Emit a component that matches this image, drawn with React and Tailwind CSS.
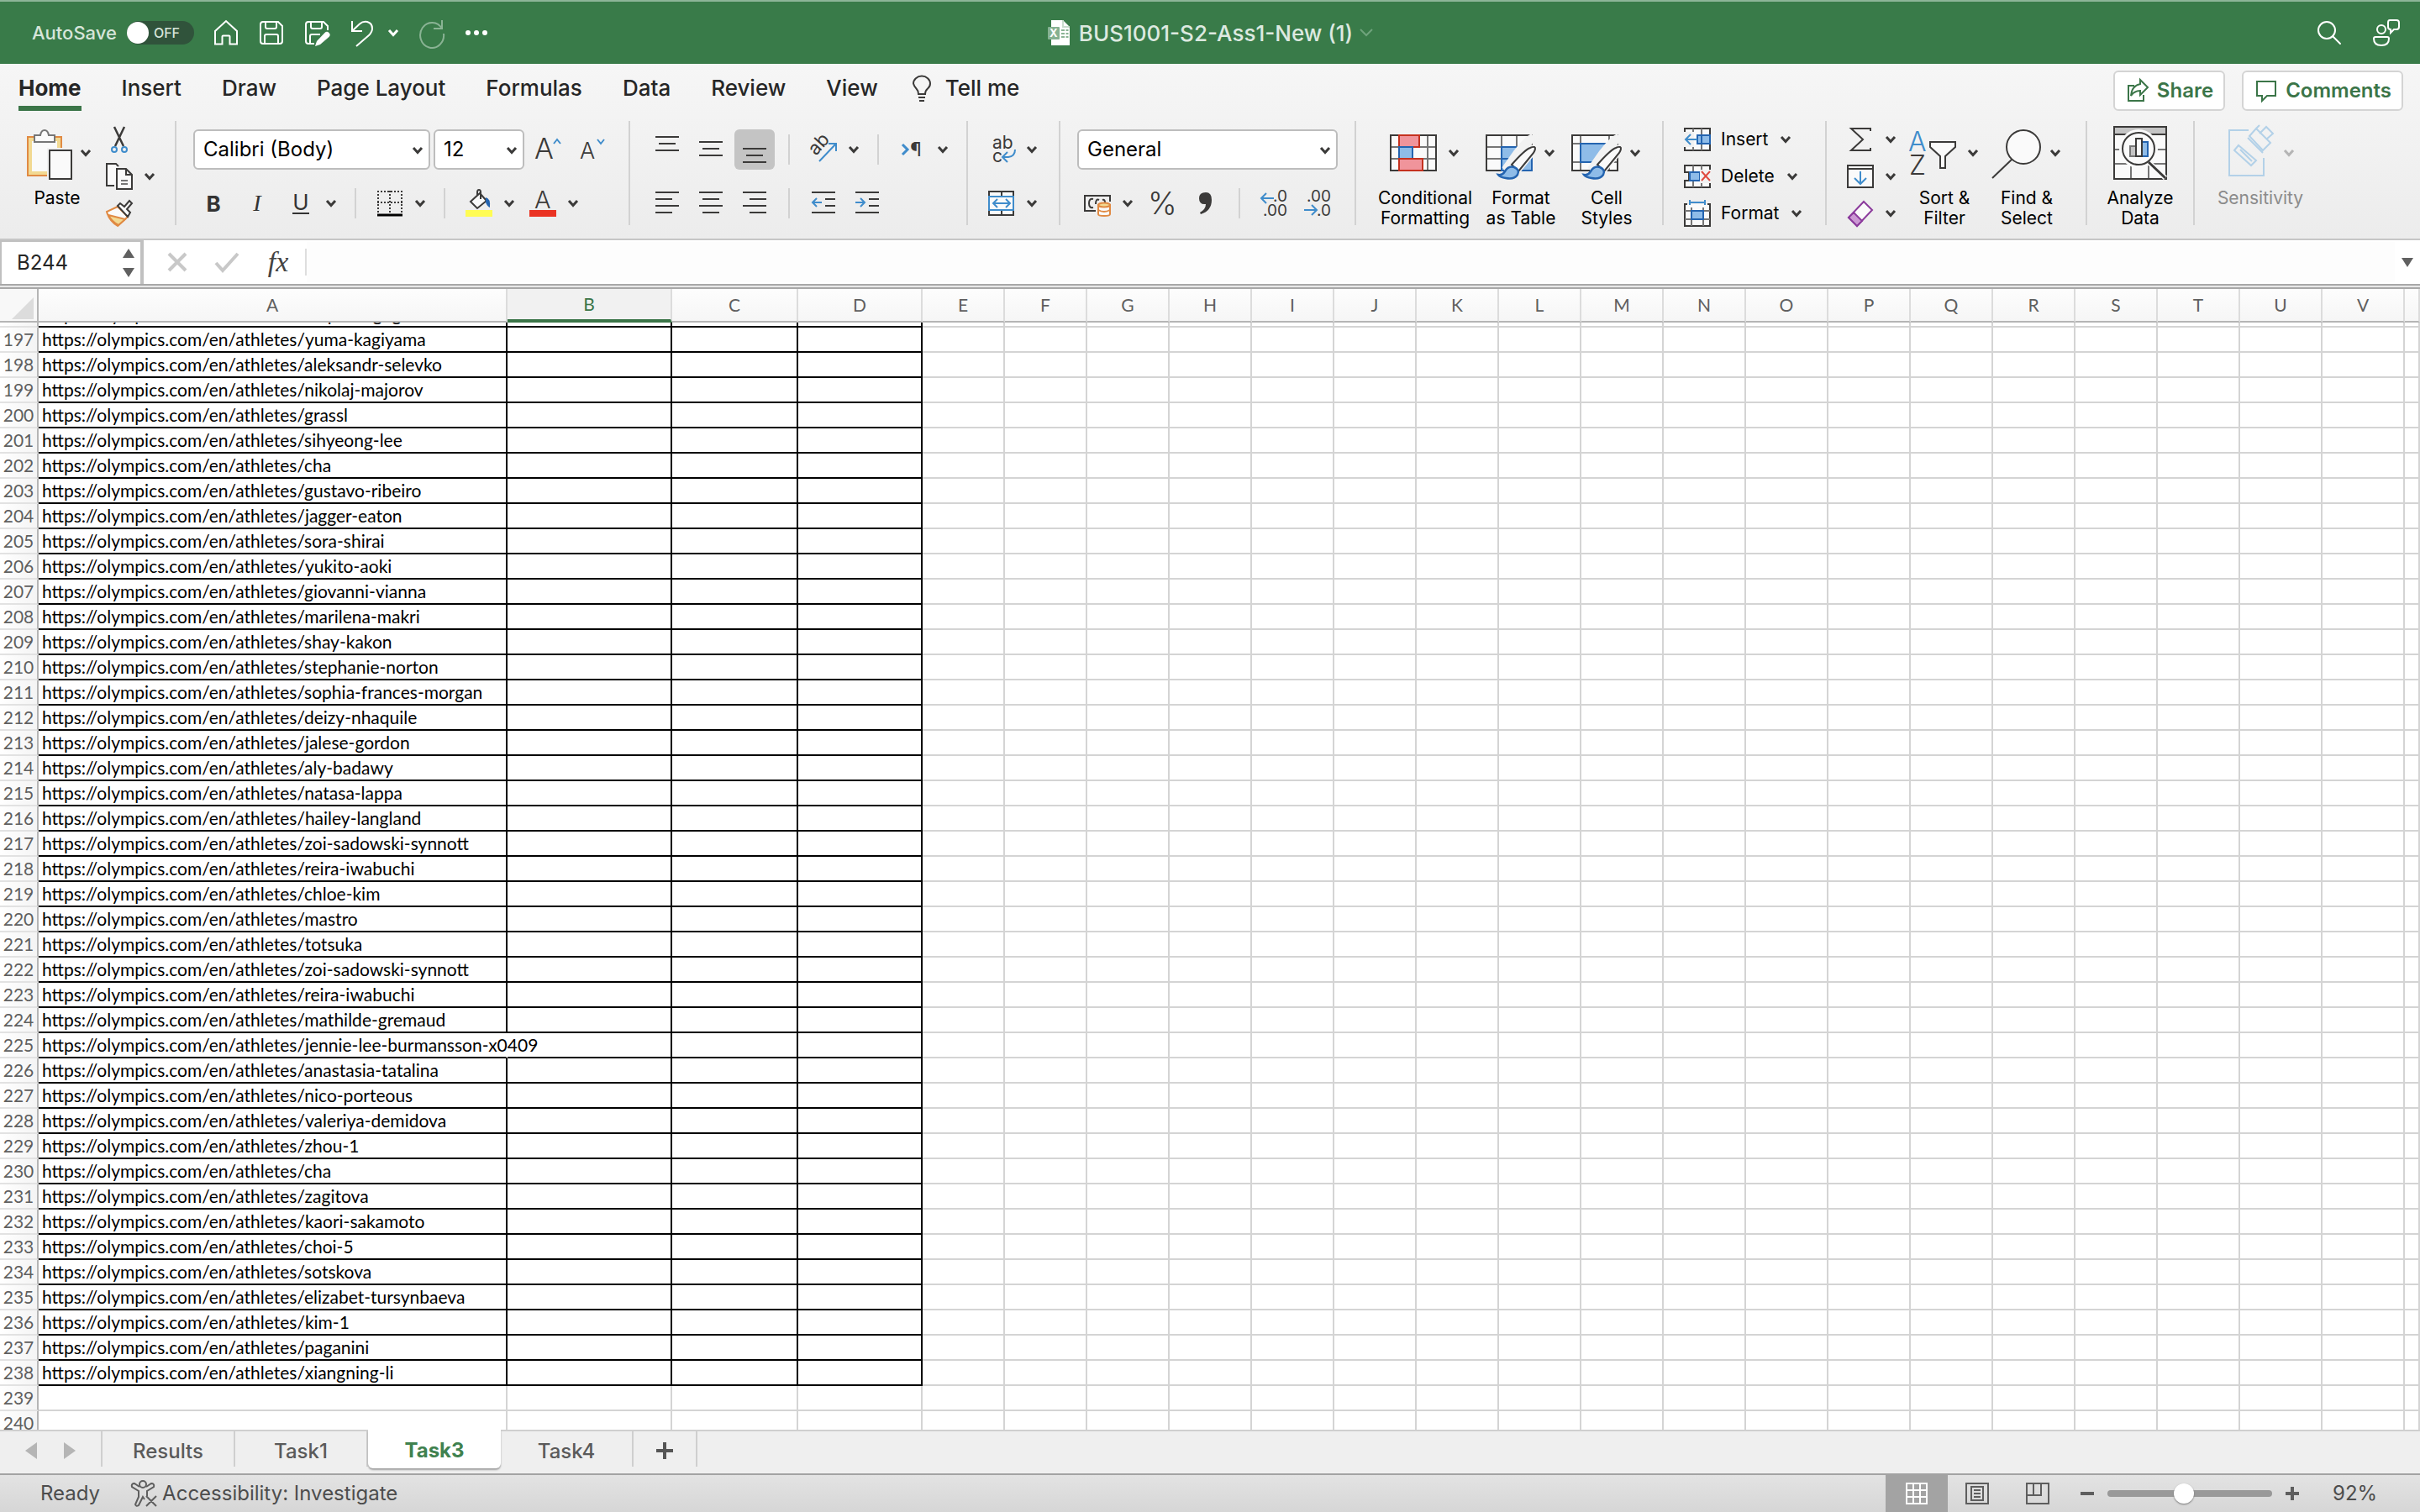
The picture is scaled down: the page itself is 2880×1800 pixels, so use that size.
import React, { useState } from "react";

const athletes = [
	"stephen-gogolev",
	"yuma-kagiyama",
	"aleksandr-selevko",
	"nikolaj-majorov",
	"grassl",
	"sihyeong-lee",
	"cha",
	"gustavo-ribeiro",
	"jagger-eaton",
	"sora-shirai",
	"yukito-aoki",
	"giovanni-vianna",
	"marilena-makri",
	"shay-kakon",
	"stephanie-norton",
	"sophia-frances-morgan",
	"deizy-nhaquile",
	"jalese-gordon",
	"aly-badawy",
	"natasa-lappa",
	"hailey-langland",
	"zoi-sadowski-synnott",
	"reira-iwabuchi",
	"chloe-kim",
	"mastro",
	"totsuka",
	"zoi-sadowski-synnott",
	"reira-iwabuchi",
	"mathilde-gremaud",
	"jennie-lee-burmansson-x0409",
	"anastasia-tatalina",
	"nico-porteous",
	"valeriya-demidova",
	"zhou-1",
	"cha",
	"zagitova",
	"kaori-sakamoto",
	"choi-5",
	"sotskova",
	"elizabet-tursynbaeva",
	"kim-1",
	"paganini",
	"xiangning-li",
];

const FIRST_ROW = 196;
const LAST_ROW = 240;
const plainCols = "EFGHIJKLMNOPQRSTUV".split("");
const rows = [];
for (let n = FIRST_ROW; n <= LAST_ROW; n++) {
	rows.push({ n, slug: athletes[n - FIRST_ROW] });
}

const dark = "#3b3a39";
const blue = "#3f8ccb";
const deep = "#2464b0";
const light = "#8fbce8";

/* ---------- small building blocks ---------- */

function Svg({ w = 32, h = 32, children }) {
	return (
		<svg
			width={w}
			height={h}
			viewBox={`0 0 ${w} ${h}`}
			fill="none"
			stroke={dark}
			strokeWidth="2"
			className="shrink-0 overflow-visible"
			aria-hidden="true"
		>
			{children}
		</svg>
	);
}

function Letter({ x, y, size, color = dark, weight = 300, children }) {
	return (
		<text x={x} y={y} fontSize={size} fontWeight={weight} fill={color} stroke="none">
			{children}
		</text>
	);
}

function Chevron({ color = dark }) {
	return (
		<svg width="14" height="10" viewBox="0 0 14 10" fill="none" aria-hidden="true">
			<path d="M2 2l5 5.5L12 2" stroke={color} strokeWidth="3" />
		</svg>
	);
}

function Tool({ label, active, children }) {
	return (
		<button
			aria-label={label}
			className={
				active
					? "flex h-12 w-12 shrink-0 items-center justify-center rounded-md bg-[#c4c4c4]"
					: "flex h-12 w-12 shrink-0 items-center justify-center"
			}
		>
			{children}
		</button>
	);
}

function More({ label, color }) {
	return (
		<button
			aria-label={label + " options"}
			className="flex h-12 w-6 shrink-0 items-center justify-center"
		>
			<Chevron color={color} />
		</button>
	);
}

function Split({ label, children }) {
	return (
		<div className="flex items-center">
			<Tool label={label}>{children}</Tool>
			<More label={label} />
		</div>
	);
}

function Rule() {
	return <div className="mx-4 h-9 w-0.5 shrink-0 bg-[#d2d2d2]" />;
}

function Group({ className, children }) {
	return (
		<div className={"h-[124px] shrink-0 border-r-2 border-[#d2d2d2] " + className}>
			{children}
		</div>
	);
}

function Big({ lines, width, muted, noMenu, children }) {
	return (
		<button className={"flex shrink-0 flex-col items-center pt-1.5 " + width}>
			<span className="flex h-16 items-center gap-1">
				{children}
				{!noMenu && (
					<span className="flex w-6 justify-center">
						<Chevron color={muted ? "#b5b5b5" : dark} />
					</span>
				)}
			</span>
			<span
				className={
					muted
						? "mt-2.5 text-[21px] leading-6 text-[#8b8b8b]"
						: "mt-2.5 text-[21px] leading-6 text-black"
				}
			>
				{lines.map((line) => (
					<span key={line} className="block whitespace-nowrap">
						{line}
					</span>
				))}
			</span>
		</button>
	);
}

function RibbonSelect({ label, value, width }) {
	return (
		<label className={"relative block shrink-0 " + width}>
			<select
				aria-label={label}
				defaultValue={value}
				className="h-12 w-full appearance-none rounded-md border-2 border-[#bdbdbd] bg-white pl-2.5 text-[24px] text-black"
			>
				<option>{value}</option>
			</select>
			<span className="pointer-events-none absolute top-5 right-2">
				<Chevron />
			</span>
		</label>
	);
}

function Lines({ rows }) {
	return (
		<Svg>
			{rows.map(([x1, x2, y]) => (
				<path key={y} d={`M${x1} ${y}H${x2}`} />
			))}
		</Svg>
	);
}

/* ---------- title bar ---------- */

function TitleBar() {
	const [autoSave, setAutoSave] = useState(false);
	return (
		<header className="grid h-[76px] shrink-0 grid-cols-[1fr_auto_1fr] items-center border-t-2 border-[#8db598] bg-[#397b49] text-white">
			<div className="flex items-center pl-[38px]">
				<span id="autosave" className="text-[22px] font-medium text-[#d6e5da]">
					AutoSave
				</span>
				<button
					role="switch"
					aria-checked={autoSave}
					aria-labelledby="autosave"
					onClick={() => setAutoSave(!autoSave)}
					className="ml-3 flex h-7 w-20 items-center rounded-full bg-[#30533b]"
				>
					<span className="h-[26px] w-[26px] rounded-full bg-white" />
					<span className="ml-1.5 text-[16px] font-medium text-[#d6e5da]">OFF</span>
				</button>
				<div className="ml-[22px] flex items-center gap-[22px]">
					<button aria-label="Home">
						<Svg>
							<path
								stroke="#fff"
								d="M3 14L16 2l13 12v15.500h-8.500V20.500q0-1-1-1h-7q-1 0-1 1v9H3z"
							/>
						</Svg>
					</button>
					<button aria-label="Save">
						<Svg>
							<path
								stroke="#fff"
								d="M3 6q0-3 3-3h18l5 5v18q0 3-3 3H6q-3 0-3-3zM9 3v6q0 2 2 2h9q2 0 2-2V3M8 29V20q0-2 2-2h12q2 0 2 2v9"
							/>
						</Svg>
					</button>
					<button aria-label="Save as">
						<Svg>
							<path
								stroke="#fff"
								d="M13 29H6q-3 0-3-3V6q0-3 3-3h18l5 5v5M9 3v6q0 2 2 2h9q2 0 2-2V3M8 29V20q0-2 2-2h10"
							/>
							<path
								fill="#fff"
								stroke="none"
								d="M25.500 16a3.500 3.500 0 0 1 5 5L20 30l-6 2 2-6z"
							/>
						</Svg>
					</button>
					<div className="flex items-center gap-3.5">
						<button aria-label="Undo">
							<Svg>
								<path
									stroke="#fff"
									d="M4 2v12h12M4 14L13 5.500Q17 2 22 3q6 1.500 6 8 0 4-4 8L9 32"
								/>
							</Svg>
						</button>
						<button aria-label="Undo history">
							<Chevron color="#fff" />
						</button>
					</div>
					<button aria-label="Redo">
						<Svg>
							<g stroke="#8ab394">
								<path d="M29 1v10H19M29 11A14 15 0 1 0 31 17" />
							</g>
						</Svg>
					</button>
					<button aria-label="Customize toolbar">
						<Svg>
							<g fill="#fff" stroke="none">
								<circle cx="6" cy="16" r="3" />
								<circle cx="16" cy="16" r="3" />
								<circle cx="26" cy="16" r="3" />
							</g>
						</Svg>
					</button>
				</div>
			</div>
			<div className="flex items-center">
				<Svg w={28} h={32}>
					<path d="M5 1h14l8 8v22H5z" fill="#fff" stroke="none" />
					<path d="M19 1v8h8" stroke="#c9dccd" />
					<path
						d="M17 13h4M17 17h4M17 21h4M22.500 13h3M22.500 17h3M22.500 21h3"
						stroke="#8ab394"
					/>
					<rect x="1" y="9" width="14" height="15" rx="1" fill="#86b192" stroke="none" />
					<Letter x="3" y="21" size="13" color="#fff" weight="700">
						X
					</Letter>
				</Svg>
				<h1 className="ml-2.5 text-[26px] font-medium whitespace-nowrap text-[#dde9e0]">
					BUS1001-S2-Ass1-New (1)
				</h1>
				<button aria-label="File menu" className="ml-2">
					<Svg w={16} h={12}>
						<path d="M1 2l7 7 7-7" stroke="#6fa37c" />
					</Svg>
				</button>
			</div>
			<div className="flex items-center justify-end gap-9 pr-6">
				<button aria-label="Search">
					<Svg>
						<g stroke="#fff" strokeLinecap="round">
							<circle cx="13" cy="13" r="10" />
							<path d="M20 20l9 9" />
						</g>
					</Svg>
				</button>
				<button aria-label="Contact">
					<Svg>
						<g stroke="#fff">
							<circle cx="10" cy="12" r="5" />
							<path d="M3 21h14q2 0 2 2 0 8-9 8t-9-8q0-2 2-2zM20 1h8q3 0 3 3v5q0 3-3 3h-3l-4 4v-4q-3 0-3-3V4q0-3 2-3z" />
						</g>
					</Svg>
				</button>
			</div>
		</header>
	);
}

/* ---------- ribbon ---------- */

const tabs = ["Insert", "Draw", "Page Layout", "Formulas", "Data", "Review", "View"];

function Tabs() {
	return (
		<nav className="flex h-[68px] items-start pt-2 pr-5 pl-[22px] font-medium text-[#262626]">
			<div className="flex flex-1 items-start gap-12 text-[26px] leading-[42px]">
				<button className="border-b-[6px] border-[#3b7548] font-bold">Home</button>
				{tabs.map((tab) => (
					<button key={tab} className="whitespace-nowrap">
						{tab}
					</button>
				))}
				<button className="-ml-3 flex items-center gap-3 whitespace-nowrap">
					<Svg>
						<path d="M12 23q0-4-2.500-6.500T6 10.500a10 9 0 0 1 20 0q0 3.500-3 6T20 23zM12 27h8M13 31h6" />
					</Svg>
					Tell me
				</button>
			</div>
			<div className="flex gap-5 text-[24px] font-semibold text-[#3b7548]">
				<button className="flex h-12 items-center gap-2 rounded-md border-2 border-[#d4d4d4] bg-white px-3">
					<Svg w={30}>
						<g stroke="#3b7548">
							<path d="M11 10H4v18h18v-7" />
							<path d="M18 3l9 9-9 9v-5q-7 0-11 6 1-12 11-14z" />
						</g>
					</Svg>
					Share
				</button>
				<button className="flex h-12 items-center gap-2 rounded-md border-2 border-[#d4d4d4] bg-white px-3">
					<Svg w={30}>
						<path stroke="#3b7548" d="M4 5h22v17H16l-6 6v-6H4z" />
					</Svg>
					Comments
				</button>
			</div>
		</nav>
	);
}

function Brush() {
	return (
		<>
			<path
				d="M58 13q2 1 0 5L42 43 26 51 40 31Q52 16 58 13z"
				fill="#f2f2f2"
				stroke="#f2f2f2"
				strokeWidth="6"
			/>
			<path d="M62 25q2.500 1-1 7L43 54l-8-8Q51 28 57 26q3-1.500 5-1z" fill="#f2f2f2" stroke="#f2f2f2" strokeWidth="5" />
			<path d="M62 25q2.500 1-1 7L43 54l-8-8Q51 28 57 26q3-1.500 5-1z" fill="#fafafa" />
			<path
				d="M19 58q5 1 8-4 4-7 11-5 7 3 4 9-4 6-14 4-7-1-9-4z"
				fill={light}
				stroke={deep}
				strokeWidth="2.500"
			/>
		</>
	);
}

function Ribbon() {
	return (
		<div className="flex pb-4 text-[#333]">
			<Group className="flex gap-0.5 pr-[18px] pl-5">
				<Big lines={["Paste"]} width="w-24">
					<Svg w={64} h={64}>
						<rect x="11" y="13" width="40" height="46" fill="#f2d992" stroke="#e08a43" />
						<rect x="16" y="18" width="30" height="36" fill="#fafafa" stroke="none" />
						<path d="M19 19v-8h7q1-6 5-6t5 6h7v8z" fill="#fafafa" stroke="#767676" />
						<rect x="34" y="26" width="30" height="38" fill="#f2f2f2" stroke="none" />
						<rect x="37" y="29" width="26" height="34" fill="#fafafa" />
					</Svg>
				</Big>
				<div>
					<div className="flex h-11 items-center">
						<Tool label="Cut">
							<Svg>
								<path d="M10 1l11 23M22 1L11 24" strokeWidth="2.500" />
								<circle cx="10" cy="28" r="3" stroke={blue} />
								<circle cx="22" cy="28" r="3" stroke={blue} />
							</Svg>
						</Tool>
					</div>
					<div className="flex h-11 items-center">
						<Split label="Copy">
							<Svg>
								<path d="M10 27H1V1h11l3 3" fill="#fafafa" />
								<path d="M13 7h11l7 7v17H13zM24 7v7h7" fill="#fafafa" />
								<path d="M18 21h8M18 25h8" stroke="#767676" />
							</Svg>
						</Split>
					</div>
					<div className="flex h-11 items-center">
						<Tool label="Format painter">
							<Svg>
								<path d="M14 8L1 14q3 11 13 17L26 20z" fill="#fafafa" stroke="#e08a43" />
								<path d="M3 18l20 5-8 7Q7 26 3 18z" fill="#f2d992" stroke="#e08a43" />
								<path d="M14 7l3-3 5 4 6-7 3 3-6 7 4 4-3 5z" fill="#fafafa" />
							</Svg>
						</Tool>
					</div>
				</div>
			</Group>

			<Group className="flex flex-col gap-4 px-5 pt-2.5">
				<div className="flex items-center gap-1">
					<RibbonSelect label="Font" value="Calibri (Body)" width="w-[282px]" />
					<RibbonSelect label="Font size" value="12" width="w-[108px]" />
					<Tool label="Increase font size">
						<Svg>
							<Letter x="0" y="27" size="34">
								A
							</Letter>
							<path d="M23 9l4-5 4 5" stroke={blue} />
						</Svg>
					</Tool>
					<Tool label="Decrease font size">
						<Svg>
							<Letter x="2" y="27" size="27">
								A
							</Letter>
							<path d="M23 4l4 5 4-5" stroke={blue} />
						</Svg>
					</Tool>
				</div>
				<div className="flex items-center">
					<div className="flex gap-1 text-[26px]">
						<Tool label="Bold">
							<span className="font-bold">B</span>
						</Tool>
						<Tool label="Italic">
							<span className="font-['Liberation_Serif'] text-[28px] italic">I</span>
						</Tool>
						<Split label="Underline">
							<span className="border-b-2 border-[#333] leading-6">U</span>
						</Split>
					</div>
					<Rule />
					<Split label="Borders">
						<Svg>
							<path
								d="M1 2h30M1 15h30M2 1v27M16 1v27M30 1v27"
								strokeDasharray="2 2"
								fill="none"
							/>
							<path d="M1 30h30" stroke="#000" strokeWidth="3" />
						</Svg>
					</Split>
					<Rule />
					<div className="flex gap-1">
						<Split label="Fill color">
							<Svg>
								<path d="M6 14L17 4l8 9-11 9zM14 6V3q0-3 2-3t2 3v8" fill="#fafafa" />
								<path d="M24 9q6 1 5 12-3-1-5-6z" fill={deep} stroke="none" />
								<path d="M0 28h32" stroke="#fffc54" strokeWidth="8" />
							</Svg>
						</Split>
						<Split label="Font color">
							<Svg>
								<Letter x="6" y="22" size="29">
									A
								</Letter>
								<path d="M0 28h32" stroke="#ea3323" strokeWidth="8" />
							</Svg>
						</Split>
					</div>
				</div>
			</Group>

			<Group className="flex flex-col gap-4 pt-2.5 pr-4 pl-5">
				<div className="flex items-center">
					<div className="flex gap-1">
						<Tool label="Top align">
							<Lines rows={[[2, 30, 1], [6, 26, 9], [2, 30, 17]]} />
						</Tool>
						<Tool label="Middle align">
							<Lines rows={[[2, 30, 7], [6, 26, 15], [2, 30, 23]]} />
						</Tool>
						<Tool label="Bottom align" active>
							<Lines rows={[[2, 30, 15], [6, 26, 23], [2, 30, 31]]} />
						</Tool>
					</div>
					<Rule />
					<Split label="Orientation">
						<Svg>
							<g transform="translate(7 24) rotate(-48)">
								<Letter x="0" y="0" size="22" weight="400">
									ab
								</Letter>
							</g>
							<path d="M11 30L31 9M22 9h9v9" stroke={blue} />
						</Svg>
					</Split>
					<Rule />
					<Split label="Text direction">
						<Svg w={28}>
							<path d="M2 10l6 6-6 6" stroke={blue} strokeWidth="3" />
							<Letter x="11" y="24" size="23" weight="400">
								¶
							</Letter>
						</Svg>
					</Split>
				</div>
				<div className="flex items-center">
					<div className="flex gap-1">
						<Tool label="Align left">
							<Lines rows={[[2, 30, 3], [2, 22, 11], [2, 30, 19], [2, 22, 27]]} />
						</Tool>
						<Tool label="Center">
							<Lines rows={[[2, 30, 3], [6, 26, 11], [2, 30, 19], [6, 26, 27]]} />
						</Tool>
						<Tool label="Align right">
							<Lines rows={[[2, 30, 3], [10, 30, 11], [2, 30, 19], [10, 30, 27]]} />
						</Tool>
					</div>
					<Rule />
					<div className="flex gap-1">
						<Tool label="Decrease indent">
							<Svg>
								<path d="M2 3h28M18 11h12M18 19h12M2 27h28" />
								<path d="M14 15H4M8 10l-5 5 5 5" stroke={blue} />
							</Svg>
						</Tool>
						<Tool label="Increase indent">
							<Svg>
								<path d="M2 3h28M18 11h12M18 19h12M2 27h28" />
								<path d="M2 15h10M8 10l5 5-5 5" stroke={blue} />
							</Svg>
						</Tool>
					</div>
				</div>
			</Group>

			<Group className="flex flex-col gap-4 pt-2.5 pr-5 pl-4">
				<Split label="Wrap text">
					<Svg>
						<Letter x="5" y="15" size="21" weight="400">
							ab
						</Letter>
						<Letter x="5" y="31" size="21" weight="400">
							c
						</Letter>
						<path d="M32 16q0 8-8 9h-6M23 19l-6 6 6 6" stroke={blue} />
					</Svg>
				</Split>
				<Split label="Merge and center">
					<Svg>
						<rect x="1" y="2" width="29" height="28" fill="#fafafa" />
						<path d="M16 2v28" />
						<rect x="1" y="8" width="29" height="16" fill="#fafafa" stroke={blue} />
						<path d="M6 16h20M11 11l-5 5 5 5M21 11l5 5-5 5" stroke={blue} />
					</Svg>
				</Split>
			</Group>

			<Group className="flex flex-col gap-4 px-5 pt-2.5">
				<RibbonSelect label="Number format" value="General" width="w-[310px]" />
				<div className="flex items-center">
					<div className="flex gap-1">
						<Split label="Currency">
							<Svg>
								<path d="M14 25H1V7h30v7" />
								<path d="M11 11Q6 10 6 16t5 5M18 12q-4-2-4 5M22 12q3-1 3 3" />
								<g fill="#fafafa" stroke="#e08a43">
									<path d="M17 18v11q0 2 7 2t7-2V18z" />
									<ellipse cx="24" cy="18" rx="7" ry="2.500" fill="#f2d992" />
									<path d="M17 24q7 4 14 0" />
								</g>
							</Svg>
						</Split>
						<Tool label="Percent">
							<Svg>
								<Letter x="0" y="29" size="37">
									%
								</Letter>
							</Svg>
						</Tool>
						<Tool label="Comma">
							<Svg>
								<path
									d="M17 3q7 0 7 9 0 13-13 17l-1-2q7-4 7-10-8 1-8-7 0-7 8-7z"
									fill={dark}
									stroke="none"
								/>
							</Svg>
						</Tool>
					</div>
					<Rule />
					<div className="flex gap-1">
						<Tool label="Increase decimal">
							<Svg>
								<g fill={dark} stroke="none" fontSize="19" textAnchor="end">
									<text x="32" y="14">
										.0
									</text>
									<text x="32" y="31">
										.00
									</text>
								</g>
								<path d="M16 10H1M7 4l-6 6 6 6" stroke={blue} />
							</Svg>
						</Tool>
						<Tool label="Decrease decimal">
							<Svg>
								<g fill={dark} stroke="none" fontSize="19" textAnchor="end">
									<text x="32" y="14">
										.00
									</text>
									<text x="32" y="31">
										.0
									</text>
								</g>
								<path d="M0 24h15M9 18l6 6-6 6" stroke={blue} />
							</Svg>
						</Tool>
					</div>
				</div>
			</Group>

			<Group className="flex gap-2 pr-5 pl-6">
				<Big lines={["Conditional", "Formatting"]} width="w-[116px]">
					<Svg w={64} h={64}>
						<rect x="5" y="11" width="54" height="42" fill="#fafafa" />
						<path d="M5 25h54M5 39h54M49 11v42M15 11v42" stroke="#767676" />
						<rect x="5" y="11" width="54" height="42" />
						<rect x="15" y="11" width="24" height="14" fill="#f0949b" stroke="#c5311f" />
						<rect x="15" y="25" width="16" height="14" fill={light} stroke={deep} />
						<rect x="15" y="39" width="28" height="14" fill="#f0949b" stroke="#c5311f" />
					</Svg>
				</Big>
				<Big lines={["Format", "as Table"]} width="w-24">
					<Svg w={64} h={64}>
						<rect x="5" y="11" width="54" height="42" fill="#fafafa" />
						<path d="M5 25h54M5 39h54M23 11v42M41 11v42" stroke="#767676" />
						<rect x="5" y="11" width="54" height="42" />
						<rect x="23" y="25" width="36" height="28" fill={light} stroke={deep} />
						<path d="M23 39h36M41 25v28" stroke={deep} />
						<Brush />
					</Svg>
				</Big>
				<Big lines={["Cell", "Styles"]} width="w-[92px]">
					<Svg w={64} h={64}>
						<rect x="5" y="11" width="54" height="42" fill="#fafafa" />
						<path d="M5 21h54M5 43h54M15 11v42M49 11v42" stroke="#767676" />
						<rect x="5" y="11" width="54" height="42" />
						<rect x="15" y="21" width="34" height="22" fill={light} stroke={deep} />
						<Brush />
					</Svg>
				</Big>
			</Group>

			<Group className="w-[194px] pl-6 text-[21px] text-black">
				<button className="flex h-11 items-center">
					<Svg>
						<rect x="1" y="3" width="30" height="26" fill="#fafafa" />
						<path d="M11 3v26M21 3v26" stroke="#767676" />
						<path d="M0 7v18h12V7z" fill="#f2f2f2" stroke="none" />
						<path d="M16 11h15v10H16zM21 11v10" fill={light} stroke={deep} />
						<path d="M16 16H2M8 10l-6 6 6 6" stroke={blue} />
					</Svg>
					<span className="mr-3.5 ml-3">Insert</span>
					<Chevron />
				</button>
				<button className="flex h-11 items-center">
					<Svg>
						<path d="M1 11V3h30v26H1v-8h5V11z" fill="#fafafa" />
						<path d="M11 3v26M21 3v26" stroke="#767676" />
						<path d="M7 11h12v10H7z" fill={light} stroke={deep} />
						<path d="M19 8h13v16H19z" fill="#f2f2f2" stroke="none" />
						<path d="M21 10l10 11M31 10L21 21" stroke="#e0493e" />
					</Svg>
					<span className="mr-3.5 ml-3">Delete</span>
					<Chevron />
				</button>
				<button className="flex h-11 items-center">
					<Svg>
						<path d="M4 5H1v26h30V5h-3" fill="#fafafa" />
						<path d="M1 13h30M1 23h30M9 9v22M23 9v22" stroke="#767676" />
						<rect x="9" y="13" width="14" height="10" fill={light} stroke={deep} />
						<path d="M7 3h18M7 0v6M25 0v6" stroke={blue} />
					</Svg>
					<span className="mr-3.5 ml-3">Format</span>
					<Chevron />
				</button>
			</Group>

			<Group className="flex gap-1.5 pr-6 pl-4">
				<div>
					<div className="flex h-11 items-center">
						<Split label="AutoSum">
							<Svg>
								<path d="M28 6V3H5l14 13L5 29h23v-3" />
							</Svg>
						</Split>
					</div>
					<div className="flex h-11 items-center">
						<Split label="Fill">
							<Svg>
								<rect x="1" y="3" width="30" height="26" fill="#fafafa" />
								<path d="M1 7h30" />
								<path d="M16 10v15M9 18l7 7 7-7" stroke={blue} />
							</Svg>
						</Split>
					</div>
					<div className="flex h-11 items-center">
						<Split label="Clear">
							<Svg>
								<path d="M20 2l10 10-18 19L2 21z" fill="#fafafa" stroke="#8b3a9c" />
								<path d="M8 15l10 10-6 6L2 21z" fill="#cb98d3" stroke="#8b3a9c" />
							</Svg>
						</Split>
					</div>
				</div>
				<Big lines={["Sort &", "Filter"]} width="w-[92px]">
					<Svg w={64} h={64}>
						<Letter x="3" y="30" size="32" color={blue}>
							A
						</Letter>
						<Letter x="4" y="58" size="32">
							Z
						</Letter>
						<path d="M29 19h30v6L47 36v14h-6V36L29 25z" fill="#fafafa" />
					</Svg>
				</Big>
				<Big lines={["Find &", "Select"]} width="w-[92px]">
					<Svg w={64} h={64}>
						<circle cx="42" cy="25" r="20" fill="#fafafa" />
						<path d="M28 40L5 62" />
					</Svg>
				</Big>
			</Group>

			<Group className="flex px-4">
				<Big lines={["Analyze", "Data"]} width="w-[94px]" noMenu>
					<Svg w={64} h={64}>
						<rect x="1" y="1" width="62" height="62" fill="#fafafa" />
						<path d="M1 1h62v9H1z" fill="#c4c4c4" />
						<path d="M1 28h62M1 45h62M21 45v18M42 45v18" stroke="#767676" />
						<rect x="1" y="1" width="62" height="62" />
						<circle cx="30" cy="27" r="22" fill="#fafafa" stroke="#fafafa" />
						<path d="M42 43l20 19" stroke="#fafafa" strokeWidth="6" />
						<path d="M42 43l20 19" strokeWidth="3" />
						<circle cx="30" cy="27" r="19" fill="#fafafa" />
						<rect x="20" y="24" width="7" height="12" fill="#c4c4c4" stroke="#767676" />
						<rect x="34" y="19" width="7" height="17" fill={light} stroke={deep} />
						<rect x="27" y="15" width="7" height="21" fill="#fafafa" />
					</Svg>
				</Big>
			</Group>

			<div className="pl-6">
				<Big lines={["Sensitivity"]} width="w-[108px]" muted>
					<Svg w={64} h={64}>
						<g stroke="#b3d1e8">
							<path d="M32 5H9v54h41V38" />
							<path d="M33 12l8-9 17 17-9 9zM41 3l4-4M45 9l8-8 8 8-8 7M31 14l18 18M20 23l-5 6 20 18 6-6zM22 28l14 14" />
						</g>
					</Svg>
				</Big>
			</div>
		</div>
	);
}

/* ---------- formula bar ---------- */

function FormulaBar() {
	return (
		<div className="flex h-14 shrink-0 items-center border-t-2 border-b-2 border-t-[#c6c6c6] border-b-[#a8a8a8] bg-white">
			<div className="flex h-full w-[171px] shrink-0 items-center border-2 border-r-4 border-b-0 border-[#c0c0c0]">
				<input
					aria-label="Name box"
					defaultValue="B244"
					className="h-full w-36 pb-0.5 pl-[18px] text-[24px] text-[#262626]"
				/>
				<div className="flex flex-col gap-3">
					<button aria-label="Previous name">
						<svg width="14" height="11" className="block fill-[#606060]" aria-hidden="true">
							<path d="M7 0l7 11H0z" />
						</svg>
					</button>
					<button aria-label="Next name">
						<svg width="14" height="11" className="block fill-[#606060]" aria-hidden="true">
							<path d="M0 0h14L7 11z" />
						</svg>
					</button>
				</div>
			</div>
			<div className="flex flex-1 items-center">
				<div className="flex gap-7 pr-4 pl-6">
					<button aria-label="Cancel">
						<Svg>
							<path d="M6 6l20 20M26 6L6 26" stroke="#c8c8c8" strokeWidth="4" />
						</Svg>
					</button>
					<button aria-label="Enter">
						<Svg>
							<path d="M2 17l8 9L28 6" stroke="#c8c8c8" strokeWidth="4" />
						</Svg>
					</button>
					<button
						aria-label="Insert function"
						className="w-8 font-['Liberation_Serif'] text-[34px] leading-8 italic text-[#444]"
					>
						fx
					</button>
				</div>
				<div className="h-8 w-0.5 bg-[#dedede]" />
				<input aria-label="Formula" className="h-12 flex-1 bg-[#fdfdfd] pl-4 text-[24px]" />
				<button aria-label="Expand formula bar" className="px-2">
					<svg width="14" height="11" className="block fill-[#606060]" aria-hidden="true">
						<path d="M0 0h14L7 11z" />
					</svg>
				</button>
			</div>
		</div>
	);
}

/* ---------- sheet ---------- */

function Columns() {
	return (
		<colgroup>
			<col className="w-[46px]" />
			<col className="w-[558px]" />
			<col className="w-[196px]" />
			<col className="w-[150px]" />
			<col className="w-[148px]" />
			{plainCols.map((c) => (
				<col key={c} className="w-[98px]" />
			))}
			<col />
		</colgroup>
	);
}

const headCell =
	"h-10 border-r-2 border-b-2 border-r-[#dcdcdc] border-b-[#b5b5b5] bg-linear-to-b from-[#fdfdfd] to-[#f6f6f6] p-0 font-normal text-[#5f5f5f]";
const boxed = "border-r-2 border-b-2 border-black p-0";
const plain = "border-r-2 border-b-2 border-[#d4d4d4] p-0";
const spill = "border-r-2 border-b-2 border-r-transparent border-b-black p-0";

function Row({ n, slug }) {
	const cell = slug ? boxed : plain;
	const name = slug ? "https://olympics.com/en/athletes/" + slug : "";
	return (
		<tr className="h-[30px]">
			<th className="border-r-2 border-b-2 border-r-[#b5b5b5] border-b-[#e2e2e2] bg-linear-to-r from-white to-[#f4f4f4] p-0 text-center leading-7 font-normal text-[#5f5f5f]">
				{n}
			</th>
			<td
				className={
					(name.length > 56 ? spill : cell) + " pl-1 leading-7 whitespace-nowrap text-black"
				}
			>
				{name}
			</td>
			<td className={cell} />
			<td className={cell} />
			<td className={cell} />
			{plainCols.map((c) => (
				<td key={c} className={plain} />
			))}
			<td className={plain} />
		</tr>
	);
}

function Sheet() {
	return (
		<main className="flex min-h-0 flex-1 flex-col bg-white font-['Lato',sans-serif] text-[21px]">
			<table className="w-full shrink-0 table-fixed border-separate border-spacing-0">
				<Columns />
				<thead>
					<tr>
						<th className="border-r-2 border-b-2 border-[#b5b5b5] bg-[#f8f8f8] p-0">
							<svg width="26" height="26" className="mt-2 ml-3.5 block fill-[#dcdcdc]" aria-hidden="true">
								<path d="M26 0v26H0z" />
							</svg>
						</th>
						<th className={headCell}>A</th>
						<th className="h-10 border-r-2 border-b-4 border-r-[#dcdcdc] border-b-[#3b7548] bg-[#f1f1f1] p-0 font-normal text-[#3b7548]">
							B
						</th>
						<th className={headCell}>C</th>
						<th className={headCell}>D</th>
						{plainCols.map((c) => (
							<th key={c} className={headCell}>
								{c}
							</th>
						))}
						<th className={headCell} />
					</tr>
				</thead>
			</table>
			<div className="min-h-0 flex-1 overflow-hidden">
				<table className="-mt-6 w-full table-fixed border-separate border-spacing-0">
					<Columns />
					<tbody>
						{rows.map((row) => (
							<Row key={row.n} n={row.n} slug={row.slug} />
						))}
					</tbody>
				</table>
			</div>
		</main>
	);
}

/* ---------- sheet tabs and status bar ---------- */

function SheetTabs() {
	const [current, setCurrent] = useState("Task3");
	return (
		<div className="flex h-[52px] shrink-0 items-start border-t-2 border-[#cfcfcf] bg-[#efefef] text-[24px] text-[#5a5a5a]">
			<div className="flex h-[42px] w-[122px] items-center gap-8 border-r-2 border-[#cfcfcf] pt-1 pl-[30px]">
				<button aria-label="Previous sheet">
					<svg width="14" height="20" className="block fill-[#b5b5b5]" aria-hidden="true">
						<path d="M14 0v20L0 10z" />
					</svg>
				</button>
				<button aria-label="Next sheet">
					<svg width="14" height="20" className="block fill-[#b5b5b5]" aria-hidden="true">
						<path d="M0 0v20l14-10z" />
					</svg>
				</button>
			</div>
			{["Results", "Task1", "Task3", "Task4"].map((name) => (
				<button
					key={name}
					onClick={() => setCurrent(name)}
					className={
						name === current
							? "-mt-0.5 h-[46px] w-[158px] rounded-b-md bg-white pt-1 font-bold text-[#40814f] shadow-[0_2px_2px_#a0a0a0]"
							: "h-[42px] w-[158px] border-r-2 border-[#cfcfcf] pt-1.5 font-medium"
					}
				>
					{name}
				</button>
			))}
			<button
				aria-label="Add sheet"
				className="flex h-[42px] w-[76px] items-center justify-center border-r-2 border-[#cfcfcf] pt-1"
			>
				<Svg w={20} h={20}>
					<path d="M10 0v20M0 10h20" stroke="#555" strokeWidth="4" />
				</Svg>
			</button>
		</div>
	);
}

function StatusBar() {
	const [zoom, setZoom] = useState(92);
	return (
		<footer className="flex h-[46px] shrink-0 items-center border-t-2 border-[#a3a3a3] bg-linear-to-b from-[#e3e3e3] to-[#d6d6d6] pl-12 text-[24px] text-[#4d4d4d]">
			<span>Ready</span>
			<button className="ml-9 flex items-center gap-1">
				<Svg w={34}>
					<g stroke="#5e5e5e">
						<circle cx="15" cy="5" r="4" />
						<path d="M11 8L5 4Q1 4 2 8l8 5v7L6 29q1 3 4 1l5-10 2 3M19 8l6-4q4 0 3 4l-8 5v6M19 19l12 12M31 19L19 31" />
					</g>
				</Svg>
				Accessibility: Investigate
			</button>
			<div className="ml-auto flex h-full items-center">
				<button aria-label="Normal view" className="flex h-full w-[74px] items-center justify-center bg-[#a3a3a3]">
					<Svg w={28} h={28}>
						<path d="M2 2h24v24H2zM10 2v24M18 2v24M2 10h24M2 18h24" stroke="#fff" />
					</Svg>
				</button>
				<button aria-label="Page layout view" className="flex h-full w-[70px] items-center justify-center">
					<Svg w={28} h={28}>
						<path d="M1 2h26v24H1zM7 6h14v16H7zM10 10h8M10 14h8M10 18h8" stroke="#5e5e5e" />
					</Svg>
				</button>
				<button aria-label="Page break view" className="flex h-full w-[74px] items-center justify-center">
					<Svg w={28} h={28}>
						<path d="M1 2h26v24H1zM1 16h17V2M9 2v14" stroke="#5e5e5e" />
					</Svg>
				</button>
				<button aria-label="Zoom out" onClick={() => setZoom(zoom - 1)} className="mr-4 ml-3.5">
					<Svg w={16} h={16}>
						<path d="M0 8h16" stroke="#5e5e5e" strokeWidth="4" />
					</Svg>
				</button>
				<input
					type="range"
					aria-label="Zoom"
					min="0"
					max="200"
					value={zoom}
					onChange={(event) => setZoom(Number(event.target.value))}
					className="h-2 w-[196px] appearance-none rounded-full bg-[#999] [&::-webkit-slider-thumb]:size-6 [&::-webkit-slider-thumb]:appearance-none [&::-webkit-slider-thumb]:rounded-full [&::-webkit-slider-thumb]:bg-white [&::-webkit-slider-thumb]:shadow-[0_1px_2px_#777]"
				/>
				<button aria-label="Zoom in" onClick={() => setZoom(zoom + 1)} className="ml-4">
					<Svg w={16} h={16}>
						<path d="M8 0v16M0 8h16" stroke="#5e5e5e" strokeWidth="4" />
					</Svg>
				</button>
				<span className="w-[144px] pl-10">{zoom}%</span>
			</div>
		</footer>
	);
}

export default function App() {
	return (
		<div className="flex h-screen flex-col overflow-hidden bg-white font-['Inter',sans-serif]">
			<TitleBar />
			<div className="shrink-0 bg-linear-to-b from-[#f6f6f6] to-[#ececec]">
				<Tabs />
				<Ribbon />
			</div>
			<FormulaBar />
			<div className="h-1 shrink-0 border-b-2 border-[#a8a8a8] bg-[#e8e8e8]" />
			<Sheet />
			<SheetTabs />
			<StatusBar />
		</div>
	);
}
